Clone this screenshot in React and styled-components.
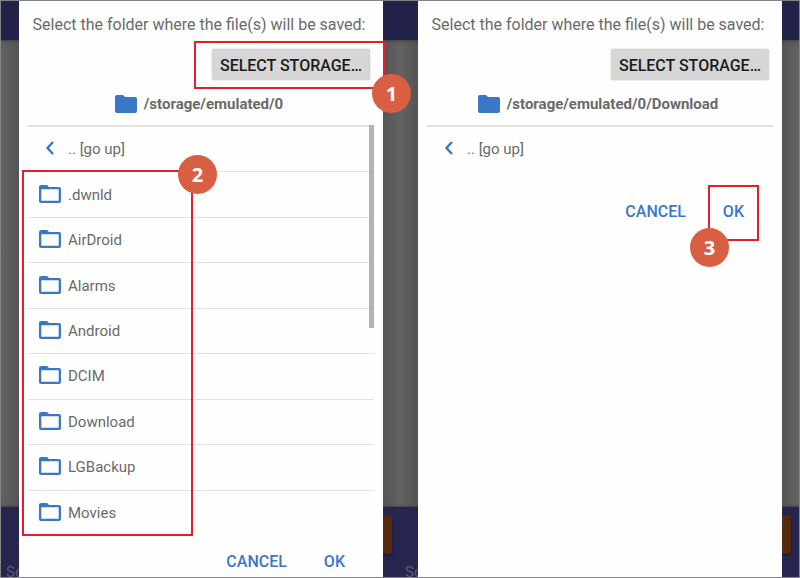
import React from 'react';
import styled, { createGlobalStyle } from 'styled-components';

const blue = '#3a78c6';
const grey = '#6a6a6a';
const line = '#e2e2e2';

const folders = ['.dwnld', 'AirDroid', 'Alarms', 'Android', 'DCIM', 'Download', 'LGBackup', 'Movies'];

const GlobalStyle = createGlobalStyle`
  * {
    box-sizing: border-box;
  }

  body {
    margin: 0;
    font-family: Roboto, sans-serif;
    font-size: 16px;
    color: ${grey};
  }

  button {
    font-family: inherit;
    font-size: inherit;
    border: none;
    cursor: pointer;
  }
`;

const Page = styled.main`
  display: grid;
  grid-template-columns: 1fr 1fr;
  height: 100vh;
  min-height: 480px;
  border: 1px solid #858585;
  overflow: hidden;
`;

// Backdrop and dialog share the same grid cell
const Phone = styled.section`
  display: grid;
  min-width: 0;
  min-height: 0;

  > * {
    grid-area: 1 / 1;
    min-height: 0;
  }
`;

const Backdrop = styled.div`
  display: flex;
  flex-direction: column;
  overflow: hidden;
  background: linear-gradient(to right, #626262, #545454 18px, #545454 calc(100% - 18px), #626262);
`;

const AppBar = styled.div`
  height: 39px;
  background: #22224a;
  box-shadow: 0 1px 3px #3c3c3c;
`;

const AppFooter = styled.div`
  display: flex;
  justify-content: space-between;
  height: 70px;
  margin-top: auto;
  padding: 8px 8px 0 5px;
  background: #25254f;
  box-shadow: 0 -1px 2px #404040;
`;

const AppFooterLabel = styled.span`
  align-self: flex-end;
  line-height: 10px;
  font-size: 15px;
  color: #5a5a76;
`;

const AppFooterButton = styled.span`
  width: 60px;
  height: 39px;
  border-radius: 2px;
  background: #54290f;
  box-shadow: 0 1px 2px #15152c;
`;

// Dialog
const Dialog = styled.div`
  display: flex;
  flex-direction: column;
  margin: 0 17px 0 18px;
  padding: 12px 9px 0;
  background: #fefefe;
`;

const Title = styled.h1`
  margin: 0 0 12px;
  padding-right: 4px;
  font-size: 16px;
  font-weight: 400;
  line-height: 24px;
  text-align: center;
  white-space: nowrap;
`;

const StorageArea = styled.div`
  position: relative;
  align-self: flex-end;
  margin-right: 4px;
`;

const StorageButton = styled.button`
  display: block;
  height: 31px;
  padding: 2px 8px 0;
  border-radius: 2px;
  background: #d6d6d6;
  box-shadow: 0 0 2px #c4c4c4;
  color: #1c1c1c;
  font-weight: 500;
`;

const PathBar = styled.div`
  display: flex;
  align-items: center;
  justify-content: center;
  gap: 7px;
  height: 47px;
  padding: 2px 4px 0 0;
  border-bottom: 2px solid ${line};
  font-size: 15px;
  font-weight: 700;
`;

const ListArea = styled.div`
  position: relative;
  display: flex;
  flex: ${props => props.fill ? '1' : '0 0 auto'};
  min-height: 0;
  margin-bottom: ${props => props.fill ? '0' : '14px'};
`;

const List = styled.ul`
  display: flex;
  flex: 1;
  flex-direction: column;
  margin: 0;
  padding: 0;
  list-style: none;
`;

const Item = styled.li`
  display: flex;
  flex: 1;
  border-bottom: ${props => props.last ? 'none' : `1px solid ${line}`};
`;

const ItemButton = styled.button`
  display: flex;
  flex: 1;
  align-items: center;
  gap: 7px;
  min-height: 44px;
  padding: 0 11px;
  background: none;
  color: ${grey};
  font-size: 15px;
  text-align: left;
`;

const ScrollThumb = styled.div`
  position: absolute;
  top: -2px;
  right: 0;
  width: 5px;
  height: 203px;
  background: #b3b3b3;
`;

const Actions = styled.div`
  display: flex;
  justify-content: flex-end;
  gap: 7px;
  padding: 10px 14px 0 0;
`;

const ActionArea = styled.div`
  position: relative;
`;

const ActionButton = styled.button`
  height: 32px;
  padding: 0 15px;
  background: none;
  color: ${blue};
  font-weight: 500;
`;

// Red callout frames with a numbered badge on one corner
const Callout = styled.div`
  position: absolute;
  inset: ${props => props.inset};
  border: 2px solid #e2202c;
  pointer-events: none;
`;

const Badge = styled.span`
  position: absolute;
  top: ${props => props.top};
  left: ${props => props.left};
  display: flex;
  align-items: center;
  justify-content: center;
  width: 39px;
  height: 39px;
  margin: -20px 0 0 -20px;
  border-radius: 50%;
  background: #d95f43;
  color: #fff;
  font-family: 'Open Sans', sans-serif;
  font-size: 20px;
  font-weight: 700;
`;

const FolderIcon = () => (
  <svg width="22" height="18" viewBox="0 0 22 18" fill={blue}>
    <path d="M2 0h6l2 2h10a2 2 0 0 1 2 2v12a2 2 0 0 1-2 2H2a2 2 0 0 1-2-2V2a2 2 0 0 1 2-2z" />
  </svg>
);

const FolderOutlineIcon = () => (
  <svg width="22" height="20" viewBox="0 0 22 20" fill={blue}>
    <path
      fillRule="evenodd"
      d="M2 0h6l2 2h10a2 2 0 0 1 2 2v12a2 2 0 0 1-2 2H2a2 2 0 0 1-2-2V2a2 2 0 0 1 2-2zM2.300 4.200v11.500h17.400V4.200z"
    />
  </svg>
);

const BackIcon = () => (
  <svg width="22" height="18" viewBox="0 0 22 18" fill="none" stroke={blue} strokeWidth="2.4">
    <path d="M14 2L8.500 8l5.500 6" />
  </svg>
);

const FolderDialog = ({ path, items, storageCallout, listCallout, okCallout }) => {
  const hasItems = items.length > 0;

  return (
    <Phone>
      <Backdrop aria-hidden="true">
        <AppBar />
        <AppFooter>
          <AppFooterLabel>Sc</AppFooterLabel>
          <AppFooterButton />
        </AppFooter>
      </Backdrop>
      <Dialog role="dialog">
        <Title>Select the folder where the file(s) will be saved:</Title>
        <StorageArea>
          <StorageButton>SELECT STORAGE…</StorageButton>
          {storageCallout && (
            <Callout inset="-8px -15px -9px -18px">
              <Badge top="calc(100% + 7px)" left="calc(100% + 9px)">{storageCallout}</Badge>
            </Callout>
          )}
        </StorageArea>
        <PathBar>
          <FolderIcon />
          <span>{path}</span>
        </PathBar>
        <ListArea fill={hasItems}>
          <List>
            <Item last={!hasItems}>
              <ItemButton>
                <BackIcon />
                .. [go up]
              </ItemButton>
            </Item>
            {items.map((name, index) => (
              <Item key={name} last={index === items.length - 1}>
                <ItemButton>
                  <FolderOutlineIcon />
                  {name}
                </ItemButton>
              </Item>
            ))}
          </List>
          {hasItems && <ScrollThumb />}
          {listCallout && (
            <Callout inset="43px 181px -1px -6px">
              <Badge top="3px" left="calc(100% + 7px)">{listCallout}</Badge>
            </Callout>
          )}
        </ListArea>
        <Actions>
          <ActionButton>CANCEL</ActionButton>
          <ActionArea>
            <ActionButton>OK</ActionButton>
            {okCallout && (
              <Callout inset="-10px 0 -14px 0">
                <Badge top="calc(100% + 9px)" left="0">{okCallout}</Badge>
              </Callout>
            )}
          </ActionArea>
        </Actions>
      </Dialog>
    </Phone>
  );
};

const App = () => (
  <>
    <GlobalStyle />
    <Page>
      <FolderDialog path="/storage/emulated/0" items={folders} storageCallout="1" listCallout="2" />
      <FolderDialog path="/storage/emulated/0/Download" items={[]} okCallout="3" />
    </Page>
  </>
);

export default App;
